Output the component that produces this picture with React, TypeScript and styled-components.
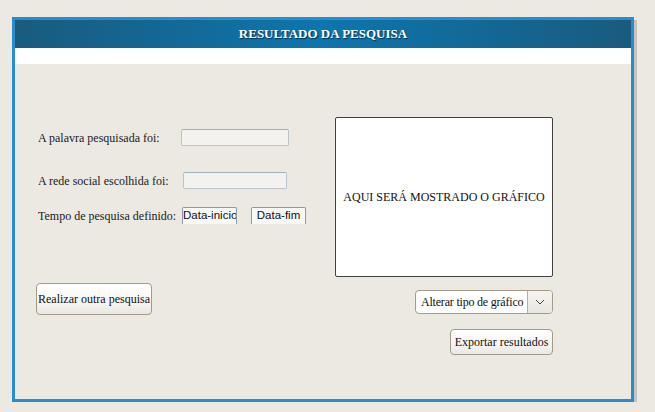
import React from "react";
import styled, { createGlobalStyle } from "styled-components";

const GlobalStyle = createGlobalStyle`
  html, body {
    margin: 0;
    padding: 0;
    background: #ece9e3;
    font-family: "Liberation Serif", "Times New Roman", serif;
  }
`;

export default function App() {
  return (
    <>
      <GlobalStyle />
      <Panel>
        <Header>RESULTADO DA PESQUISA</Header>
        <WhiteStrip />
        <Body>
          <TopSection>
            <Form>
              <Row $gap={26}>
                <Label>A palavra pesquisada foi:</Label>
                <Field $width={108} $shift={0} />
              </Row>
              <Row $gap={18}>
                <Label>A rede social escolhida foi:</Label>
                <Field $width={104} $shift={2} />
              </Row>
              <Row $gap={0}>
                <Label>Tempo de pesquisa definido:</Label>
                <DateBox $shift={1}>Data-inicio</DateBox>
                <DateBox $shift={14}>Data-fim</DateBox>
              </Row>
            </Form>
            <ChartBox>AQUI SERÁ MOSTRADO O GRÁFICO</ChartBox>
          </TopSection>
          <BottomSection>
            <Button $width={116} $height={32}>
              Realizar outra pesquisa
            </Button>
            <RightActions>
              <Select>
                <SelectText>Alterar tipo de gráfico</SelectText>
                <SelectArrow>
                  <svg width="10" height="6" viewBox="0 0 10 6">
                    <polyline
                      points="1,1 5,5 9,1"
                      fill="none"
                      stroke="#444"
                      strokeWidth="1"
                    />
                  </svg>
                </SelectArrow>
              </Select>
              <Button $width={103} $height={26}>
                Exportar resultados
              </Button>
            </RightActions>
          </BottomSection>
        </Body>
      </Panel>
    </>
  );
}

const Panel = styled.div`
  margin: 17px 0 0 12px;
  width: 622px;
  height: 385px;
  box-sizing: border-box;
  border: 3px solid #2b8ccd;
  box-shadow: 3px 3px 0 #c8c4bd;
  display: flex;
  flex-direction: column;
`;

const Header = styled.div`
  height: 28px;
  display: flex;
  align-items: center;
  justify-content: center;
  background: linear-gradient(90deg, #1a5b7e 0%, #0c76ae 50%, #1a5b7e 100%);
  color: #fff;
  font-weight: bold;
  font-size: 13px;
  text-shadow: 1px 1px 1px #0a2b40;
`;

const WhiteStrip = styled.div`
  height: 16px;
  background: #fff;
`;

const Body = styled.div`
  flex: 1;
  padding: 53px 78px 0 21px;
`;

const TopSection = styled.div`
  display: flex;
  align-items: flex-start;
`;

const Form = styled.div`
  width: 299px;
  padding-top: 12px;
  display: flex;
  flex-direction: column;
`;

const Row = styled.div<{ $gap: number }>`
  display: flex;
  align-items: center;
  height: 17px;
  margin-bottom: ${(p) => p.$gap}px;
`;

const Label = styled.span`
  width: 145px;
  padding-left: 2px;
  box-sizing: border-box;
  flex-shrink: 0;
  font-size: 12px;
  color: #1a1a1a;
  white-space: nowrap;
  position: relative;
  top: 1px;
`;

const Field = styled.div<{ $width: number; $shift: number }>`
  width: ${(p) => p.$width}px;
  height: 17px;
  margin-left: ${(p) => p.$shift}px;
  box-sizing: border-box;
  border: 1px solid #b9c3cc;
  border-top-color: #9fb0c0;
  border-radius: 2px;
  background: #f3f2ee;
`;

const DateBox = styled.div<{ $shift: number }>`
  width: 55px;
  height: 17px;
  margin-left: ${(p) => p.$shift}px;
  box-sizing: border-box;
  border: 1px solid #8f9aa4;
  border-bottom: none;
  border-radius: 2px 2px 0 0;
  background: #f8f8f6;
  font-family: "Liberation Sans", Arial, sans-serif;
  font-size: 11.5px;
  line-height: 15px;
  text-align: center;
  white-space: nowrap;
  overflow: hidden;
  color: #111;
`;

const ChartBox = styled.div`
  width: 218px;
  height: 160px;
  box-sizing: border-box;
  border: 1px solid #404040;
  border-radius: 2px;
  background: #fff;
  display: flex;
  align-items: center;
  justify-content: center;
  font-size: 12px;
  color: #111;
`;

const BottomSection = styled.div`
  margin-top: 6px;
  display: flex;
  justify-content: space-between;
  align-items: flex-start;
`;

const RightActions = styled.div`
  padding-top: 7px;
  display: flex;
  flex-direction: column;
  align-items: flex-end;
  gap: 15px;
`;

const Button = styled.button<{ $width: number; $height: number }>`
  width: ${(p) => p.$width}px;
  height: ${(p) => p.$height}px;
  padding: 0;
  box-sizing: border-box;
  border: 1px solid #a49a8a;
  border-radius: 4px;
  background: linear-gradient(#ffffff 0%, #f6f5f3 60%, #e9e7e3 100%);
  font-family: "Liberation Serif", "Times New Roman", serif;
  font-size: 12px;
  color: #111;
  white-space: nowrap;
  overflow: hidden;
`;

const Select = styled.div`
  width: 138px;
  height: 24px;
  box-sizing: border-box;
  border: 1px solid #a49a8a;
  border-radius: 4px;
  display: flex;
  overflow: hidden;
  background: #fff;
`;

const SelectText = styled.div`
  flex: 1;
  display: flex;
  align-items: center;
  padding-left: 5px;
  font-size: 12px;
  letter-spacing: -0.2px;
  color: #111;
  white-space: nowrap;
  overflow: hidden;
`;

const SelectArrow = styled.div`
  width: 24px;
  flex-shrink: 0;
  border-left: 1px solid #b8b0a4;
  background: linear-gradient(#f4f3f0, #e8e6e1);
  display: flex;
  align-items: center;
  justify-content: center;
`;
